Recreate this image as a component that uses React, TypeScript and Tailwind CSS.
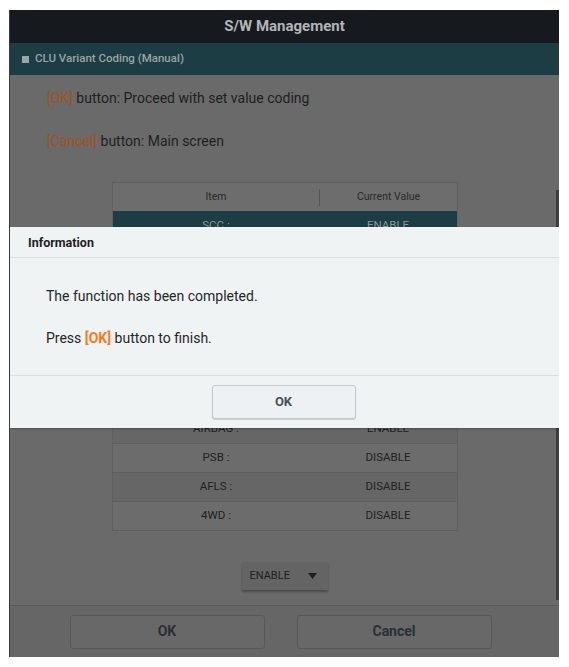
// rows hidden behind the dialog carry no text in the picture
const rows = [
  { item: "SCC :", value: "ENABLE" },
  { item: "", value: "" },
  { item: "", value: "" },
  { item: "", value: "" },
  { item: "", value: "" },
  { item: "", value: "" },
  { item: "", value: "" },
  { item: "AIRBAG :", value: "ENABLE" },
  { item: "PSB :", value: "DISABLE" },
  { item: "AFLS :", value: "DISABLE" },
  { item: "4WD :", value: "DISABLE" },
];

export default function App() {
  return (
    <div className="w-[569px] h-[667px] bg-white pt-[10px] pl-[9px] font-['Roboto',sans-serif]">
      <div className="relative w-[550px] h-[647px] flex flex-col overflow-hidden border-l border-[#3a3a3a]">
        {/* Title bar */}
        <div className="h-[33px] shrink-0 bg-[#16191d] flex items-center justify-center">
          <span className="text-[15px] font-bold text-[#b3b5b7]">S/W Management</span>
        </div>

        {/* Section bar */}
        <div className="h-[32px] shrink-0 bg-[#1d3d44] flex items-center pl-[12px] gap-[6px]">
          <span className="w-[7px] h-[7px] bg-[#9aa3a5]" />
          <span className="text-[11.5px] font-medium text-[#9aa3a5]">CLU Variant Coding (Manual)</span>
        </div>

        {/* Body */}
        <div className="relative flex-1 bg-[#6a6a6a] flex flex-col">
          <div className="pl-[37px] pt-[13px] text-[14px] leading-[20px] text-[#1f1f1f]">
            <p>
              <span className="text-[#a4521a]">[OK]</span> button: Proceed with set value coding
            </p>
            <p className="mt-[23px]">
              <span className="text-[#a4521a]">[Cancel]</span> button: Main screen
            </p>
          </div>

          {/* Table */}
          <div className="ml-[102px] mt-[31px] w-[346px] border border-[#606060] text-[11.5px] text-[#222]">
            <div className="h-[28px] flex items-center bg-[#6d6d6d] text-[10.5px] text-[#2a2a2a]">
              <div className="w-[206px] text-center">Item</div>
              <div className="w-px h-[17px] bg-[#555]" />
              <div className="flex-1 text-center">Current Value</div>
            </div>
            {rows.map((r, i) => (
              <div
                key={i}
                className={
                  i === 0
                    ? "h-[29px] flex items-center bg-[#1d3d44] text-[#8a9597]"
                    : i % 2 === 0
                      ? "h-[29px] flex items-center bg-[#6c6c6c] border-t border-[#5f5f5f]"
                      : "h-[29px] flex items-center bg-[#666666] border-t border-[#5f5f5f]"
                }
              >
                <div className="w-[206px] text-center">{r.item}</div>
                <div className="flex-1 text-center">{r.value}</div>
              </div>
            ))}
          </div>

          {/* Dropdown */}
          <div className="mt-[31px] flex justify-center">
            <div className="w-[86px] h-[28px] bg-[#646464] shadow-[0_2px_2px_rgba(0,0,0,0.3)] flex items-center pl-[8px] gap-[18px] text-[11px] text-[#1f1f1f]">
              ENABLE
              <svg width="9" height="6" viewBox="0 0 9 6">
                <path d="M0 0h9L4.5 6z" fill="#1f1f1f" />
              </svg>
            </div>
          </div>

          {/* Scrollbar */}
          <div className="absolute right-0 top-[115px] w-[3px] h-[410px] bg-[#3d3d3d]" />
        </div>

        {/* Bottom buttons */}
        <div className="h-[52px] shrink-0 bg-[#666666] border-t border-[#5a5a5a] flex items-center justify-center gap-[32px] pr-[8px]">
          <button className="w-[195px] h-[34px] rounded-[3px] border border-[#575757] bg-[#686868] text-[14px] font-bold text-[#2c2f34]">
            OK
          </button>
          <button className="w-[195px] h-[34px] rounded-[3px] border border-[#575757] bg-[#686868] text-[14px] font-bold text-[#2c2f34]">
            Cancel
          </button>
        </div>

        {/* Information dialog */}
        <div className="absolute left-0 right-0 top-[217px] h-[201px] bg-[#eff3f4] flex flex-col shadow-[0_1px_2px_rgba(0,0,0,0.25)]">
          <div className="h-[31px] shrink-0 flex items-center pl-[18px] pt-[2px] border-b border-[#dcdfe0]">
            <span className="text-[12.5px] font-bold text-[#1e1e1e]">Information</span>
          </div>
          <div className="flex-1 pl-[36px] pt-[28px] text-[14px] leading-[20px] text-[#262626]">
            <p>The function has been completed.</p>
            <p className="mt-[22px]">
              Press <span className="font-bold text-[#f57b22]">[OK]</span> button to finish.
            </p>
          </div>
          <div className="h-[53px] shrink-0 border-t border-[#dcdfe0] flex justify-center pt-[9px] pr-[2px]">
            <button className="w-[144px] h-[34px] rounded-[3px] border border-[#c4c8cb] bg-[#eef1f3] shadow-[0_1px_1px_rgba(0,0,0,0.15)] text-[13px] font-bold text-[#4a4f57]">
              OK
            </button>
          </div>
        </div>
      </div>
    </div>
  );
}
